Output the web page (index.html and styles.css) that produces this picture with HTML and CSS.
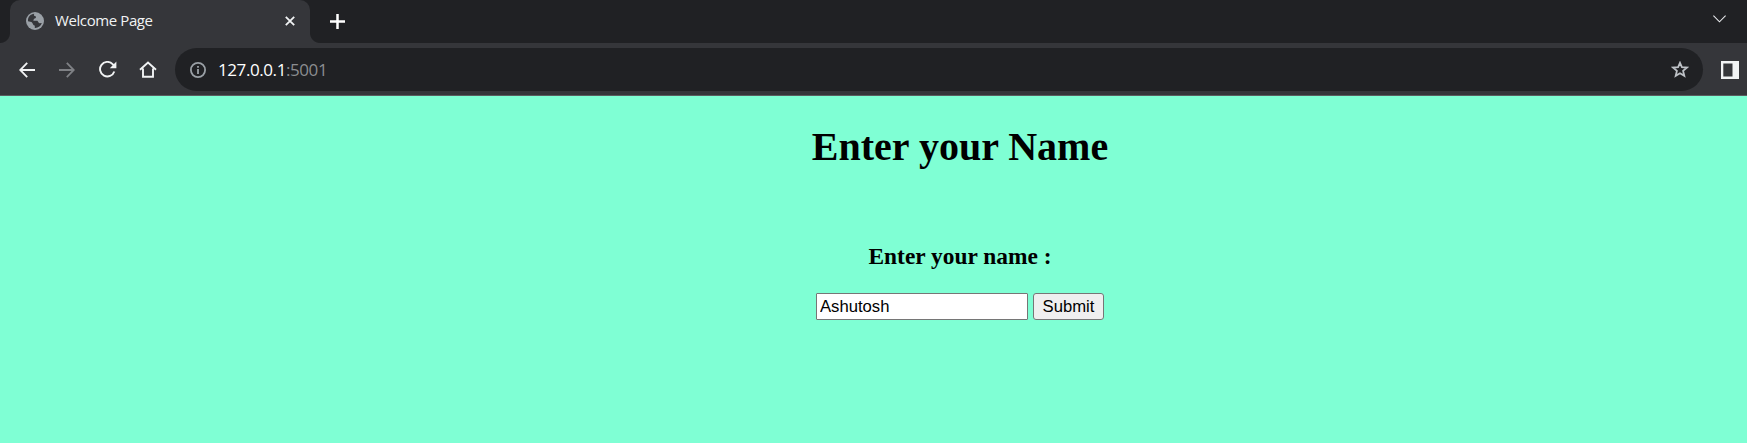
FILE: index.html
```html
<!DOCTYPE html>
<html lang="en">
<head>
<meta charset="utf-8">
<title>Welcome Page</title>
<link rel="stylesheet" href="styles.css">
</head>
<body>
<header class="browser">
  <div class="tabs">
    <div class="tab">
      <svg class="globe" width="18" height="18" viewBox="0 0 18 18"><circle cx="9" cy="9" r="9" fill="#9aa0a6"/><path d="M8.3 1.8C7.3 3.2 8.1 4.2 9.7 4.2C10.6 5.6 9.3 6.5 8 6.7L7.3 8.8H11.4C12.4 9.7 12.3 10.9 13.5 11.3L15.8 11.1C15 14.3 12 16.2 8.8 16V13.5C6.5 13.2 7.2 11 5.4 9.9L2 9.3C1.6 5 4.5 2 8.3 1.8Z" fill="#35363a"/></svg>
      <span class="tab-title">Welcome Page</span>
      <svg class="close" width="10" height="10" viewBox="0 0 10 10"><path d="M.8.8L9.2 9.2M9.2.8L.8 9.2" stroke="#f1f3f4" stroke-width="1.8"/></svg>
    </div>
    <svg class="plus" width="15" height="15" viewBox="0 0 15 15"><path d="M7.5 0V15M0 7.5H15" stroke="#fff" stroke-width="2.5"/></svg>
    <svg class="chevron" width="13" height="8" viewBox="0 0 13 8"><path d="M.4.7L6.5 6.8L12.6.7" fill="none" stroke="#e8eaed" stroke-width="1.1"/></svg>
  </div>
  <div class="toolbar">
    <svg class="nav" width="16" height="16" viewBox="0 0 16 16"><path d="M16 8H1.5M8.2.8L1.2 8L8.2 15.2" fill="none" stroke="#f1f3f4" stroke-width="1.8"/></svg>
    <svg class="nav" width="16" height="16" viewBox="0 0 16 16"><path d="M0 8H14.5M7.8.8L14.8 8L7.8 15.2" fill="none" stroke="#7f8185" stroke-width="1.8"/></svg>
    <svg class="nav reload" width="18" height="17" viewBox="0 0 18 17"><path d="M15.3 10.5A7.3 7.3 0 1 1 13.6 3.1L15 4.5" fill="none" stroke="#f1f3f4" stroke-width="1.9"/><path d="M17.4 .6V7.2H10.8Z" fill="#f1f3f4"/></svg>
    <svg class="nav home" width="18" height="17" viewBox="0 0 18 17"><path d="M1 8.8L9 1.6L17 8.8M4 7.4V15.8H14V7.4" fill="none" stroke="#f1f3f4" stroke-width="1.9"/></svg>
    <div class="address">
      <svg width="16" height="16" viewBox="0 0 16 16"><circle cx="8" cy="8" r="7.1" fill="none" stroke="#9aa0a6" stroke-width="1.8"/><path d="M8 7V12M8 4V5.7" stroke="#9aa0a6" stroke-width="1.8"/></svg>
      <span class="url">127.0.0.1<span class="port">:5001</span></span>
      <svg class="star" width="18" height="17" viewBox="0 0 18 17"><path d="M9 1.8L10.9 6.2L15.9 6.6L12.1 9.9L13.3 14.8L9 12.2L4.7 14.8L5.9 9.9L2.1 6.6L7.1 6.2Z" fill="none" stroke="#bdc1c6" stroke-width="1.8"/></svg>
    </div>
    <svg class="panel" width="18" height="18" viewBox="0 0 18 18"><path fill="#f1f3f4" fill-rule="evenodd" d="M0 0H18V18H0ZM2.3 2.5V15.5H11.5V2.5Z"/></svg>
  </div>
</header>
<main class="page">
  <h1 class="heading">Enter your Name</h1>
  <form class="name-form">
    <label class="label" for="name">Enter your name :</label>
    <div class="fields">
      <input class="name" id="name" type="text" value="Ashutosh">
      <button class="submit" type="button">Submit</button>
    </div>
  </form>
</main>
</body>
</html>
```
FILE: styles.css
```css
* { box-sizing: border-box; }
body { margin: 0; height: 443px; overflow: hidden; background: #7fffd4; display: flex; flex-direction: column; }
svg { display: block; flex: none; }
.browser { flex: none; height: 96px; background: #35363a; border-bottom: 1px solid #5b5d60; font-family: "Open Sans", "Noto Sans", sans-serif; }
.tabs { height: 43px; display: flex; background: #202124; padding-left: 10px; }
.tab { position: relative; width: 300px; height: 43px; padding: 0 15px 1px 16px; display: flex; align-items: center; background: #35363a; border-radius: 10px 10px 0 0; }
.tab::before, .tab::after { content: ""; position: absolute; bottom: 0; width: 10px; height: 10px; }
.tab::before { left: -10px; background: radial-gradient(circle at 0 0, #202124 9.5px, #35363a 10.5px); }
.tab::after { right: -10px; background: radial-gradient(circle at 100% 0, #202124 9.5px, #35363a 10.5px); }
.tab-title { margin-left: 11px; padding-bottom: 2px; color: #f1f3f4; font-size: 15px; line-height: 20px; letter-spacing: -.4px; white-space: nowrap; }
.close { margin-left: auto; }
.plus { margin: 14px 0 0 20px; }
.chevron { margin: 15px 21px 0 auto; }
.toolbar { height: 52px; display: flex; align-items: center; padding: 1px 8px 0 19px; }
.nav { margin-right: 24px; }
.reload { margin-right: 22px; }
.home { margin-right: 18px; }
.address { height: 43px; flex: 1; display: flex; align-items: center; padding: 0 14px 0 15px; background: #202124; border-radius: 22px; }
.url { margin-left: 12px; color: #fff; font-size: 17px; line-height: 24px; letter-spacing: -.42px; }
.port { color: #8b8d90; }
.star { margin-left: auto; }
.panel { margin-left: 18px; }
.page { padding: 28px 0 0 173px; display: flex; flex-direction: column; align-items: center; color: #000; font-family: "Liberation Serif", "Times New Roman", serif; }
.heading { margin: 0; font-size: 40px; line-height: 46px; }
.name-form { margin-top: 73px; display: flex; flex-direction: column; align-items: center; }
.label { font-size: 23.4px; line-height: 27px; font-weight: bold; }
.fields { margin-top: 23px; display: flex; gap: 5px; }
.name, .submit { height: 27px; margin: 0; border: 1px solid #767676; font: 16.67px/20px "Liberation Sans", Arial, sans-serif; color: #000; }
.name { width: 212px; padding: 1px 3px; background: #fff; border-radius: 1px; }
.submit { width: 71px; padding: 0; background: #efefef; border-radius: 3px; }
```
